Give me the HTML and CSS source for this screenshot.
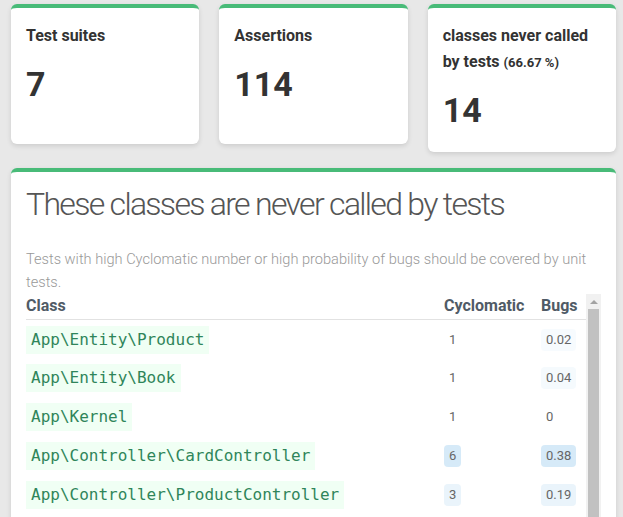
FILE: index.html
```html
<!DOCTYPE html>
<html lang="en">
<head>
<meta charset="utf-8">
<title>Unit tests</title>
<link rel="stylesheet" href="styles.css">
</head>
<body>
<div class="page">
  <div class="stats">
    <div class="card stat">
      <h4 class="stat-title">Test suites</h4>
      <div class="stat-value">7</div>
    </div>
    <div class="card stat">
      <h4 class="stat-title">Assertions</h4>
      <div class="stat-value">114</div>
    </div>
    <div class="card stat">
      <h4 class="stat-title">classes never called by tests <small class="stat-pct">(66.67 %)</small></h4>
      <div class="stat-value">14</div>
    </div>
  </div>

  <div class="card panel">
    <h2 class="panel-title">These classes are never called by tests</h2>
    <p class="panel-help">Tests with high Cyclomatic number or high probability of bugs should be covered by unit tests.</p>
    <div class="table-wrap">
      <table class="classes">
        <colgroup>
          <col class="col-class">
          <col class="col-cyclo">
          <col class="col-bugs">
        </colgroup>
        <thead>
          <tr><th>Class</th><th>Cyclomatic</th><th>Bugs</th></tr>
        </thead>
        <tbody>
          <tr><td><code class="cls">App\Entity\Product</code></td><td><span class="num">1</span></td><td><span class="num" style="background: rgba(52,152,219,0.04)">0.02</span></td></tr>
          <tr><td><code class="cls">App\Entity\Book</code></td><td><span class="num">1</span></td><td><span class="num" style="background: rgba(52,152,219,0.05)">0.04</span></td></tr>
          <tr><td><code class="cls">App\Kernel</code></td><td><span class="num">1</span></td><td><span class="num">0</span></td></tr>
          <tr><td><code class="cls">App\Controller\CardController</code></td><td><span class="num" style="background: rgba(52,152,219,0.2)">6</span></td><td><span class="num" style="background: rgba(52,152,219,0.2)">0.38</span></td></tr>
          <tr><td><code class="cls">App\Controller\ProductController</code></td><td><span class="num" style="background: rgba(52,152,219,0.1)">3</span></td><td><span class="num" style="background: rgba(52,152,219,0.1)">0.19</span></td></tr>
        </tbody>
      </table>
      <div class="scrollbar" aria-hidden="true">
        <div class="scroll-btn"><span class="scroll-arrow"></span></div>
        <div class="scroll-thumb"></div>
      </div>
    </div>
  </div>
</div>
</body>
</html>
```

FILE: styles.css
```css
* { box-sizing: border-box; }

html, body {
  margin: 0;
  padding: 0;
  overflow: hidden;
}

body {
  background: #e8e8e8;
  font-family: Roboto, "Liberation Sans", sans-serif;
  color: #333;
  height: 517px;
}

.page {
  width: 605px;
  margin-left: 11px;
  padding-top: 4px;
}

.card {
  background: #fff;
  border-top: 4px solid #48bb78;
  border-radius: 6px;
  box-shadow: 0 2px 5px rgba(0, 0, 0, 0.12);
}

.stats {
  display: flex;
  align-items: flex-start;
  gap: 20px;
  margin-bottom: 16px;
}

.stat {
  flex: 1 1 0;
  min-height: 140px;
  padding: 15px;
}

.stat-title {
  margin: 0;
  font-size: 16px;
  font-weight: 700;
  line-height: 25.6px;
  color: #333;
}

.stat-pct {
  font-size: 13px;
  font-weight: 700;
}

.stat-value {
  margin-top: 8px;
  font-size: 34px;
  font-weight: 700;
  line-height: 54px;
  color: #333;
}

.panel {
  padding: 14px 15px 15px;
}

.panel-title {
  margin: 0;
  font-size: 32px;
  font-weight: 300;
  line-height: 37.5px;
  letter-spacing: -1.7px;
  color: #555;
}

.panel-help {
  margin: 24.5px 0 0;
  font-size: 14.6px;
  font-weight: 300;
  line-height: 23px;
  color: #999;
}

.table-wrap {
  display: flex;
  align-items: flex-start;
}

.classes {
  width: 560px;
  flex: 0 0 560px;
  table-layout: fixed;
  border-collapse: collapse;
}

.col-class { width: 418px; }
.col-cyclo { width: 97px; }
.col-bugs { width: 45px; }

.classes th {
  padding: 0 0 1px;
  text-align: left;
  font-size: 16px;
  font-weight: 700;
  line-height: 24px;
  color: #505b66;
  border-bottom: 1px solid #e2e2e2;
}

.classes td {
  padding: 5.4px 0;
  vertical-align: middle;
}

.cls {
  display: inline-block;
  padding: 4px 5px;
  font-family: "DejaVu Sans Mono", monospace;
  font-size: 16px;
  line-height: 20px;
  color: #2f855a;
  background: #f0fff4;
  white-space: nowrap;
}

.num {
  display: inline-block;
  padding: 2px 5px;
  border-radius: 4px;
  font-size: 13px;
  line-height: 18px;
  color: #666;
}

.scrollbar {
  flex: 0 0 15px;
  width: 15px;
  height: 260px;
  background: #f1f1f1;
  display: flex;
  flex-direction: column;
  align-items: center;
}

.scroll-btn {
  width: 15px;
  height: 15px;
  display: flex;
  align-items: center;
  justify-content: center;
}

.scroll-arrow {
  width: 0;
  height: 0;
  border-left: 4px solid transparent;
  border-right: 4px solid transparent;
  border-bottom: 4px solid #a3a3a3;
}

.scroll-thumb {
  width: 11px;
  flex: 1 1 auto;
  background: #c1c1c1;
}
```
